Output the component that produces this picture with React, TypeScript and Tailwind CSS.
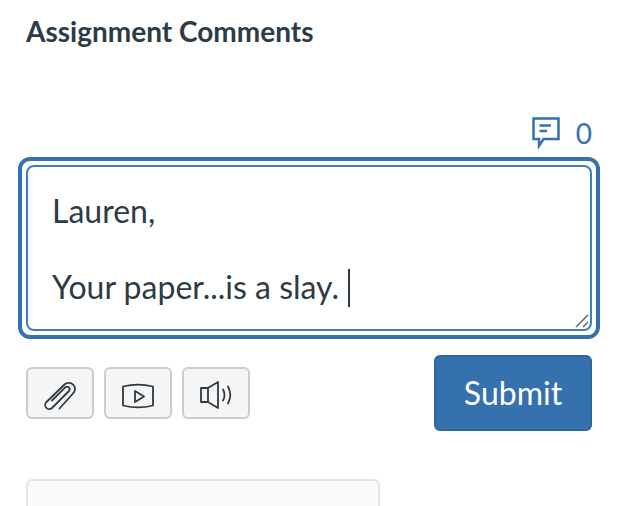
export default function App() {
  return (
    <div className="h-[506px] w-[624px] overflow-hidden bg-white pt-[13px] font-['Lato','Noto_Sans',sans-serif] text-[#2d3b45]">
      <h2 className="ml-[26px] text-[28px] leading-[36px] font-bold">Assignment Comments</h2>

      <div className="mt-[64px] mr-[32px] flex h-[40px] items-center justify-end gap-[16px] text-[#3471ae]">
        <svg width="28" height="32" viewBox="0 0 28 32" fill="none" stroke="currentColor" strokeWidth="2.5">
          <path d="M1.5 1.5H26.5V22H11.5L7 29V22H1.5Z" />
          <path d="M7.5 8.5H19M7.5 14H15" />
        </svg>
        <span className="text-[28px] leading-none">0</span>
      </div>

      <div className="mx-[18px] mt-[4px] h-[182px] w-[582px] rounded-[12px] border-4 border-[#3471ae] p-[4px]">
        <div className="relative h-[166px] rounded-[8px] border-2 border-[#3c7fbd] px-[24px] pt-[24px] text-[32px] leading-[39px]">
          <p className="h-[38px]">Lauren,</p>
          <p className="mt-[38px]">
            Your paper...is a slay.
            <span className="-mt-[6px] ml-[9px] inline-block h-[38px] w-[2px] translate-y-[8px] bg-[#2d3b45]" />
          </p>
          <svg className="absolute right-0 bottom-0" width="16" height="16" viewBox="0 0 16 16" stroke="#666" strokeWidth="1.5">
            <path d="M2 14L14 2M9 14L14 9" />
          </svg>
        </div>
      </div>

      <div className="mt-[16px] ml-[26px] mr-[32px] flex items-start justify-between">
        <div className="mt-[12px] flex gap-[10px]">
          <button className="flex h-[52px] w-[68px] items-center justify-center rounded-[6px] border-2 border-[#c7cdd1] bg-[#f5f5f5] pt-[4px]">
            <svg width="34" height="32" viewBox="0 0 34 32" fill="none" stroke="#2d3b45" strokeWidth="1.8" strokeLinecap="round" strokeLinejoin="round">
              <path d="M16.5 29.5L30 14.5A6 6 0 0 0 21.5 5.5L3.5 23A4 4 0 0 0 9 29L26 12A2.6 2.6 0 0 0 22.5 8.2L9 21.5" />
            </svg>
          </button>
          <button className="flex h-[52px] w-[68px] items-center justify-center rounded-[6px] border-2 border-[#c7cdd1] bg-[#f5f5f5] pt-[5px]">
            <svg width="34" height="26" viewBox="0 0 34 26" fill="none" stroke="#2d3b45" strokeWidth="1.8" strokeLinejoin="round">
              <path d="M2 3.5C12 1 22 1 32 3.5V22.5C22 25 12 25 2 22.5Z" />
              <path d="M14 8L23 13.5L14 19Z" />
            </svg>
          </button>
          <button className="flex h-[52px] w-[68px] items-center justify-center rounded-[6px] border-2 border-[#c7cdd1] bg-[#f5f5f5] pt-[4px]">
            <svg width="34" height="30" viewBox="0 0 34 30" fill="none" stroke="#2d3b45" strokeWidth="1.8" strokeLinecap="round" strokeLinejoin="round">
              <path d="M2 8H9V22H2Z" />
              <path d="M9 8L19 2V28L9 22" />
              <path d="M24 9.5C26 12.5 26 17.5 24 20.5M29 6.5C32 12 32 18 29 23.5" />
            </svg>
          </button>
        </div>
        <button className="h-[76px] w-[158px] rounded-[6px] border-2 border-[#2d659c] bg-[#3471ae] text-[32px] text-white">
          Submit
        </button>
      </div>

      <div className="mt-[48px] ml-[26px] h-[60px] w-[354px] rounded-[6px] border-2 border-[#e3e6e8] bg-[#fafafa]" />
    </div>
  )
}
